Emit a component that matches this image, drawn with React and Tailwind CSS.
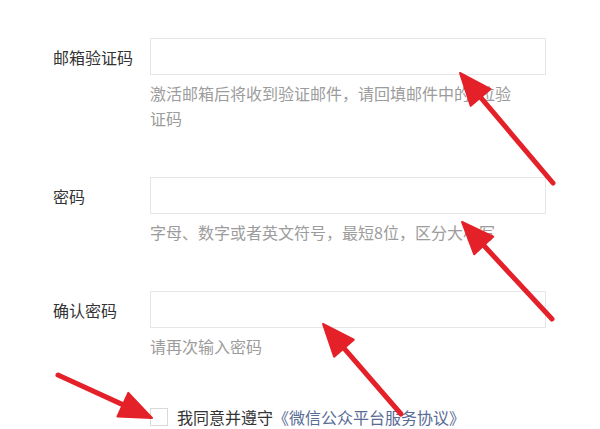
import React from 'react';

const font = { fontFamily: '"Noto Sans CJK SC", "Noto Sans", sans-serif' };

// red annotation arrows drawn over the form
const arrows = [
  { tail: [553, 183], tip: [460, 73] },
  { tail: [552, 319], tip: [462, 222] },
  { tail: [401, 414], tip: [323, 324] },
  { tail: [58, 375], tip: [152, 418] },
];

function Arrow({ tail, tip }) {
  const dx = tip[0] - tail[0];
  const dy = tip[1] - tail[1];
  const len = Math.hypot(dx, dy);
  const ux = dx / len;
  const uy = dy / len;
  const headLen = 32;
  const half = 13;
  const bx = tip[0] - ux * headLen;
  const by = tip[1] - uy * headLen;
  const p1 = [bx - uy * half, by + ux * half];
  const p2 = [bx + uy * half, by - ux * half];
  return (
    <g>
      <line
        x1={tail[0]}
        y1={tail[1]}
        x2={bx + ux * 4}
        y2={by + uy * 4}
        stroke="#e42128"
        strokeWidth="5"
        strokeLinecap="round"
      />
      <polygon
        points={`${tip[0]},${tip[1]} ${p1[0]},${p1[1]} ${p2[0]},${p2[1]}`}
        fill="#e42128"
        stroke="#e42128"
        strokeWidth="2"
        strokeLinejoin="round"
      />
    </g>
  );
}

function Field({ label, hint, className }) {
  return (
    <div className={`flex ${className || ''}`}>
      <div className="w-[150px] pl-[53px] h-[37px] flex items-center text-[16px] text-[#333]">
        {label}
      </div>
      <div>
        <div className="w-[396px] h-[37px] border border-[#e6e6e6] bg-white" />
        <p className="mt-[6px] w-[370px] text-[16px] leading-[25px] text-[#9c9c9c]">{hint}</p>
      </div>
    </div>
  );
}

export default function App() {
  return (
    <div className="relative w-[600px] h-[429px] bg-white overflow-hidden" style={font}>
      <div className="pt-[38px]">
        <Field label="邮箱验证码" hint="激活邮箱后将收到验证邮件，请回填邮件中的6位验证码" />
        <Field
          className="mt-[46px]"
          label="密码"
          hint="字母、数字或者英文符号，最短8位，区分大小写"
        />
        <Field className="mt-[46px]" label="确认密码" hint="请再次输入密码" />

        {/* agreement */}
        <div className="mt-[45px] pl-[150px] flex items-center h-[25px] text-[16px]">
          <span className="w-[18px] h-[18px] border border-[#d9d9d9] bg-white" />
          <span className="ml-[9px] text-[#333]">我同意并遵守</span>
          <span className="text-[#576b95]">《微信公众平台服务协议》</span>
        </div>
      </div>

      <svg className="absolute inset-0 pointer-events-none" width="600" height="429">
        {arrows.map((a, i) => (
          <Arrow key={i} tail={a.tail} tip={a.tip} />
        ))}
      </svg>
    </div>
  );
}
